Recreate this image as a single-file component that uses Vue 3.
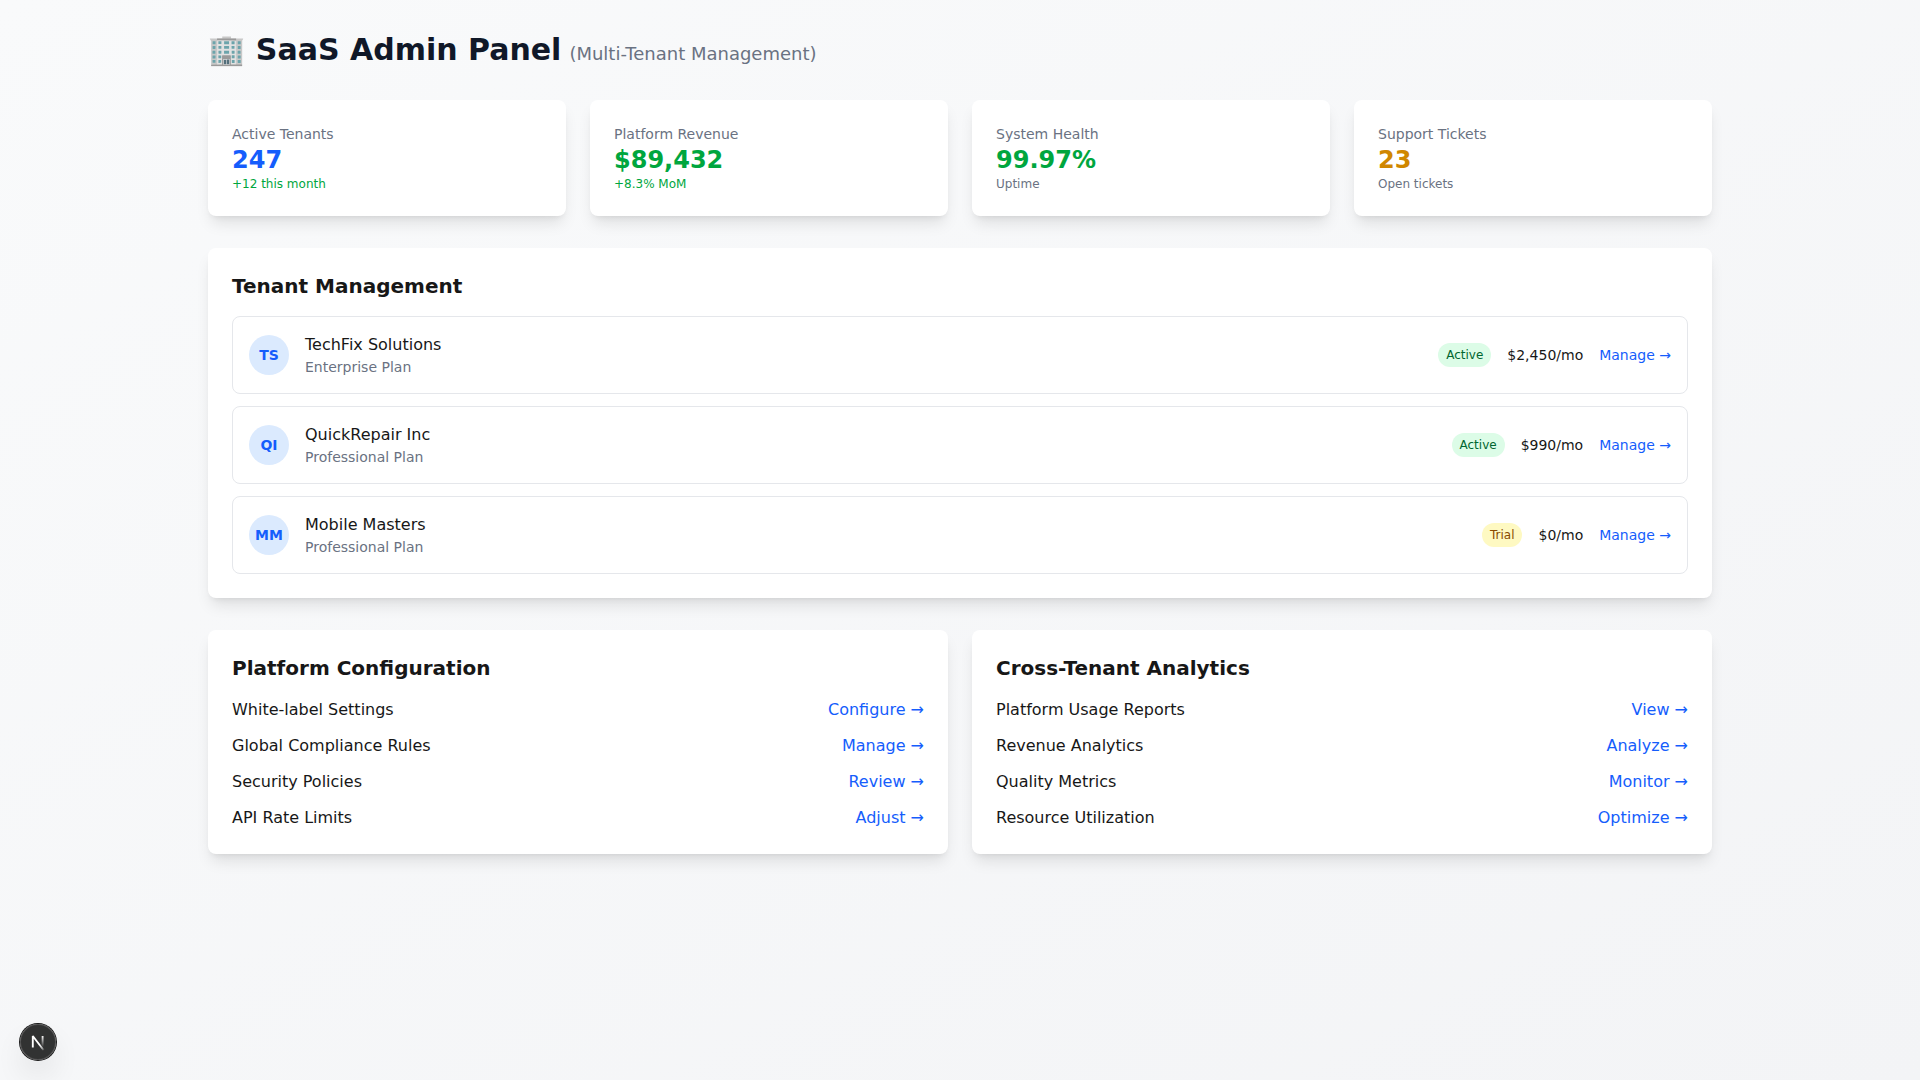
<script setup>
const stats = [
  { label: 'Active Tenants', value: '247', note: '+12 this month', tone: 'blue', noteTone: 'green' },
  { label: 'Platform Revenue', value: '$89,432', note: '+8.3% MoM', tone: 'green', noteTone: 'green' },
  { label: 'System Health', value: '99.97%', note: 'Uptime', tone: 'green', noteTone: 'gray' },
  { label: 'Support Tickets', value: '23', note: 'Open tickets', tone: 'yellow', noteTone: 'gray' },
]

const tenants = [
  { initials: 'TS', name: 'TechFix Solutions', plan: 'Enterprise Plan', status: 'Active', price: '$2,450/mo' },
  { initials: 'QI', name: 'QuickRepair Inc', plan: 'Professional Plan', status: 'Active', price: '$990/mo' },
  { initials: 'MM', name: 'Mobile Masters', plan: 'Professional Plan', status: 'Trial', price: '$0/mo' },
]

const panels = [
  {
    title: 'Platform Configuration',
    items: [
      { label: 'White-label Settings', action: 'Configure' },
      { label: 'Global Compliance Rules', action: 'Manage' },
      { label: 'Security Policies', action: 'Review' },
      { label: 'API Rate Limits', action: 'Adjust' },
    ],
  },
  {
    title: 'Cross-Tenant Analytics',
    items: [
      { label: 'Platform Usage Reports', action: 'View' },
      { label: 'Revenue Analytics', action: 'Analyze' },
      { label: 'Quality Metrics', action: 'Monitor' },
      { label: 'Resource Utilization', action: 'Optimize' },
    ],
  },
]
</script>

<template>
  <div class="page">
    <main class="container">
      <h1 class="title">🏢 SaaS Admin Panel<span class="subtitle">(Multi-Tenant Management)</span></h1>

      <section class="stats">
        <div v-for="stat in stats" :key="stat.label" class="card">
          <div class="stat-label">{{ stat.label }}</div>
          <div class="stat-value" :class="stat.tone">{{ stat.value }}</div>
          <div class="stat-note" :class="stat.noteTone">{{ stat.note }}</div>
        </div>
      </section>

      <section class="card tenants">
        <h2 class="heading">Tenant Management</h2>
        <ul class="tenant-list">
          <li v-for="tenant in tenants" :key="tenant.name" class="tenant">
            <div class="tenant-info">
              <div class="avatar">{{ tenant.initials }}</div>
              <div>
                <div>{{ tenant.name }}</div>
                <div class="tenant-plan">{{ tenant.plan }}</div>
              </div>
            </div>
            <div class="tenant-meta">
              <span class="badge" :class="tenant.status.toLowerCase()">{{ tenant.status }}</span>
              <span>{{ tenant.price }}</span>
              <button type="button" class="action">Manage →</button>
            </div>
          </li>
        </ul>
      </section>

      <div class="panels">
        <section v-for="panel in panels" :key="panel.title" class="card">
          <h2 class="heading">{{ panel.title }}</h2>
          <ul class="panel-list">
            <li v-for="item in panel.items" :key="item.label" class="panel-item">
              <span>{{ item.label }}</span>
              <button type="button" class="action">{{ item.action }} →</button>
            </li>
          </ul>
        </section>
      </div>
    </main>

    <button type="button" class="devtools" aria-label="Open Next.js Dev Tools">
      <svg width="40" height="40" viewBox="0 0 40 40" fill="none" aria-hidden="true">
        <defs>
          <linearGradient id="diagonal" x1="22.200" y1="22.300" x2="26.600" y2="28" gradientUnits="userSpaceOnUse">
            <stop stop-color="#fff" />
            <stop offset="0.600" stop-color="#fff" stop-opacity="0.600" />
            <stop offset="1" stop-color="#fff" stop-opacity="0" />
          </linearGradient>
          <linearGradient id="stem" x1="24" y1="13.500" x2="24" y2="25" gradientUnits="userSpaceOnUse">
            <stop stop-color="#fff" />
            <stop offset="1" stop-color="#fff" stop-opacity="0" />
          </linearGradient>
        </defs>
        <path d="M25.700 28.200L14.800 14V25.600" stroke="url(#diagonal)" stroke-width="1.860" stroke-linejoin="bevel" />
        <path d="M24.600 14V25.600" stroke="url(#stem)" stroke-width="1.860" />
      </svg>
    </button>
  </div>
</template>

<style>
body {
  margin: 0;
}
</style>

<style scoped>
.page {
  min-height: 100vh;
  background: linear-gradient(to bottom right, #f9fafb, #f3f4f6);
  color: #171717;
  font-family: "DejaVu Sans", "Noto Color Emoji", sans-serif;
  font-size: 16px;
  line-height: 24px;
}

.container {
  box-sizing: border-box;
  max-width: 1536px;
  margin: 0 auto;
  padding: 32px 16px;
}

.title {
  margin: 0 0 32px;
  color: #101828;
  font-size: 30px;
  line-height: 36px;
  font-weight: 700;
}

.subtitle {
  margin-left: 8px;
  color: #6a7282;
  font-size: 18px;
  line-height: 28px;
  font-weight: 400;
}

.card {
  padding: 24px;
  border-radius: 8px;
  background: #fff;
  box-shadow: 0 10px 15px -3px rgb(0 0 0 / 10%), 0 4px 6px -4px rgb(0 0 0 / 10%);
}

.stats {
  display: grid;
  grid-template-columns: repeat(4, 1fr);
  gap: 24px;
  margin-bottom: 32px;
}

.stat-label {
  color: #6a7282;
  font-size: 14px;
  line-height: 20px;
}

.stat-value {
  font-size: 24px;
  line-height: 32px;
  font-weight: 700;
}

.stat-note {
  font-size: 12px;
  line-height: 16px;
}

.blue {
  color: #155dfc;
}

.green {
  color: #00a63e;
}

.yellow {
  color: #d08700;
}

.gray {
  color: #6a7282;
}

.tenants {
  margin-bottom: 32px;
}

.heading {
  margin: 0 0 16px;
  font-size: 20px;
  line-height: 28px;
  font-weight: 600;
}

.tenant-list,
.panel-list {
  display: flex;
  flex-direction: column;
  gap: 12px;
  margin: 0;
  padding: 0;
  list-style: none;
}

.tenant {
  display: flex;
  align-items: center;
  justify-content: space-between;
  padding: 16px;
  border: 1px solid #e5e7eb;
  border-radius: 8px;
}

.tenant-info {
  display: flex;
  align-items: center;
  gap: 16px;
}

.avatar {
  display: flex;
  align-items: center;
  justify-content: center;
  width: 40px;
  height: 40px;
  border-radius: 50%;
  background: #dbeafe;
  color: #155dfc;
  font-size: 14px;
  line-height: 20px;
  font-weight: 600;
}

.tenant-plan {
  color: #6a7282;
  font-size: 14px;
  line-height: 20px;
}

.tenant-meta {
  display: flex;
  align-items: center;
  gap: 16px;
  font-size: 14px;
  line-height: 20px;
}

.badge {
  padding: 4px 8px;
  border-radius: 12px;
  font-size: 12px;
  line-height: 16px;
}

.active {
  background: #dcfce7;
  color: #016630;
}

.trial {
  background: #fef9c2;
  color: #894b00;
}

.panels {
  display: grid;
  grid-template-columns: repeat(2, 1fr);
  gap: 24px;
}

.panel-item {
  display: flex;
  align-items: center;
  justify-content: space-between;
}

.action {
  padding: 0;
  border: 0;
  background: none;
  color: #155dfc;
  font: inherit;
  cursor: pointer;
}

.action:hover {
  text-decoration: underline;
}

.devtools {
  position: fixed;
  bottom: 20px;
  left: 20px;
  display: flex;
  align-items: center;
  justify-content: center;
  width: 36px;
  height: 36px;
  padding: 0;
  border: 0;
  border-radius: 50%;
  background: rgb(0 0 0 / 80%);
  box-shadow: 0 0 0 1px #171717, inset 0 0 0 1px hsl(0 0% 100% / 14%), 0 16px 32px -8px rgb(0 0 0 / 24%);
  cursor: pointer;
}

.devtools svg {
  flex: none;
}
</style>
